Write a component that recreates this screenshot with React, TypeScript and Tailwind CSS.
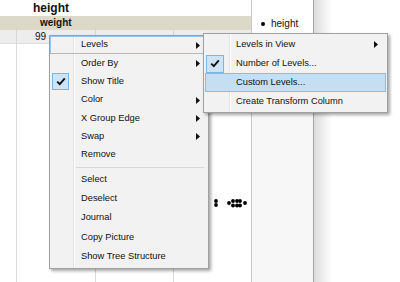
import React from "react";

const Arrow = () => (
  <svg width="4" height="7" viewBox="0 0 4 7" className="block">
    <polygon points="0,0 4,3.5 0,7" fill="#111" />
  </svg>
);

const Check = () => (
  <svg width="10" height="9" viewBox="0 0 10 9" className="block">
    <polyline points="1.2,4.6 3.8,7.2 8.8,1.4" fill="none" stroke="#111" strokeWidth="1.9" />
  </svg>
);

type Item = { label: string; arrow?: boolean; check?: boolean; hot?: boolean; sel?: boolean };

const g1: Item[] = [
  { label: "Levels", arrow: true, hot: true },
  { label: "Order By", arrow: true },
  { label: "Show Title", check: true },
  { label: "Color", arrow: true },
  { label: "X Group Edge", arrow: true },
  { label: "Swap", arrow: true },
  { label: "Remove" },
];
const g2: Item[] = [
  { label: "Select" },
  { label: "Deselect" },
  { label: "Journal" },
  { label: "Copy Picture" },
  { label: "Show Tree Structure" },
];
const sub: Item[] = [
  { label: "Levels in View", arrow: true },
  { label: "Number of Levels...", check: true },
  { label: "Custom Levels...", sel: true },
  { label: "Create Transform Column" },
];

function MainRow({ it, h }: { it: Item; h: string }) {
  return (
    <div
      className={`relative flex items-center border ${h} ${
        it.hot ? "border-[#93c3ea]" : "border-transparent"
      }`}
    >
      <div className="ml-[1px] w-[17px] h-[17px] flex items-center justify-center shrink-0">
        {it.check && (
          <div className="w-[17px] h-[17px] border border-[#7db4e0] bg-[#cde4f6] flex items-center justify-center">
            <Check />
          </div>
        )}
      </div>
      <span className="ml-[12px] flex-1 text-[9.3px] text-[#111]">{it.label}</span>
      <div className="w-[4px] mr-[7px]">{it.arrow && <Arrow />}</div>
    </div>
  );
}

function SubRow({ it }: { it: Item }) {
  return (
    <div
      className={`relative flex items-center h-[19px] mx-[1px] border ${
        it.sel ? "border-[#88bde6] bg-[#c6def1]" : "border-transparent"
      }`}
    >
      <div className="w-[18px] h-[18px] flex items-center justify-center shrink-0">
        {it.check && (
          <div className="w-[18px] h-[18px] border border-[#7db4e0] bg-[#cde4f6] flex items-center justify-center">
            <Check />
          </div>
        )}
      </div>
      <span className="ml-[12px] flex-1 text-[9.3px] text-[#111]">{it.label}</span>
      <div className="w-[4px] mr-[7px]">{it.arrow && <Arrow />}</div>
    </div>
  );
}

export default function App() {
  return (
    <div className="relative w-[400px] h-[282px] overflow-hidden bg-white font-['Liberation_Sans',Arial,sans-serif] text-[#111]">
      <div className="flex h-full">
        {/* window */}
        <div className="flex w-[314px] h-full border-r border-[#a4a4a4]">
          {/* main column */}
          <div className="flex flex-col w-[251px] h-full">
            <div className="h-[16px] pl-[33px] flex items-center text-[12px] font-bold leading-none">height</div>
            <div className="h-[14px] bg-[#dcd9c9] pl-[40px] flex items-center text-[10px] font-bold leading-none">weight</div>
            <div className="h-[14px] bg-[#ededed] border-b border-[#dcdcdc] flex">
              <div className="w-[17px] border-r border-[#d6d6d6]" />
              <div className="w-[79px] border-r border-[#d6d6d6] pl-[18px] flex items-center text-[10px] leading-none">99</div>
              <div className="w-[78px] border-r border-[#d6d6d6]" />
              <div className="flex-1" />
            </div>
            <div className="relative flex-1 flex">
              <div className="w-[17px] border-r border-[#dadada]" />
              <div className="w-[79px] border-r border-[#dadada]" />
              <div className="w-[78px] border-r border-[#dadada]" />
              <div className="flex-1" />
              <svg className="absolute left-0 top-0" width="251" height="238" viewBox="0 44 251 238">
                {[
                  [216, 201],
                  [216, 205],
                  [229, 203],
                  [233, 201],
                  [233, 205.5],
                  [237, 201],
                  [237, 205.5],
                  [240, 201],
                  [240, 205.5],
                  [245, 203],
                ].map(([x, y], i) => (
                  <circle key={i} cx={x} cy={y} r="1.9" fill="#000" />
                ))}
              </svg>
            </div>
          </div>
          {/* legend column */}
          <div className="flex-1 flex flex-col border-l border-[#c8c8c8]">
            <div className="h-[44px] bg-white flex items-start pt-[19px] pl-[9px]">
              <span className="w-[4px] h-[4px] rounded-full bg-black mt-[3px]" />
              <span className="ml-[6px] text-[10px] leading-none">height</span>
            </div>
            <div className="flex-1 bg-[#f7f7f7]" />
          </div>
        </div>
        <div className="w-[18px] h-full bg-gradient-to-r from-[#dcdcdc] to-white" />
        <div className="flex-1" />
      </div>

      {/* main context menu */}
      <div className="absolute left-[49px] top-[35px] w-[160px] h-[234px] border border-[#a0a0a0] bg-[#f2f2f2] shadow-[2px_2px_3px_rgba(0,0,0,0.35)]">
        <div className="absolute left-[23px] top-0 bottom-0 w-[1px] bg-[#e2e2e2]" />
        <div className="absolute left-[24px] top-0 bottom-0 w-[1px] bg-white" />
        <div className="relative flex flex-col">
          {g1.map((it) => (
            <MainRow key={it.label} it={it} h="h-[18.33px]" />
          ))}
          <div className="h-[6px] flex items-center pl-[26px] pr-[4px]">
            <div className="h-[1px] w-full bg-[#d8d8d8]" />
          </div>
          {g2.map((it) => (
            <MainRow key={it.label} it={it} h="h-[19.25px]" />
          ))}
        </div>
      </div>

      {/* submenu */}
      <div className="absolute left-[203px] top-[33px] w-[185px] h-[80px] border border-[#a0a0a0] bg-[#f2f2f2] shadow-[2px_2px_3px_rgba(0,0,0,0.35)]">
        <div className="absolute left-[25px] top-0 bottom-0 w-[1px] bg-[#e2e2e2]" />
        <div className="absolute left-[26px] top-0 bottom-0 w-[1px] bg-white" />
        <div className="relative flex flex-col pt-[1px]">
          {sub.map((it) => (
            <SubRow key={it.label} it={it} />
          ))}
        </div>
      </div>
    </div>
  );
}
